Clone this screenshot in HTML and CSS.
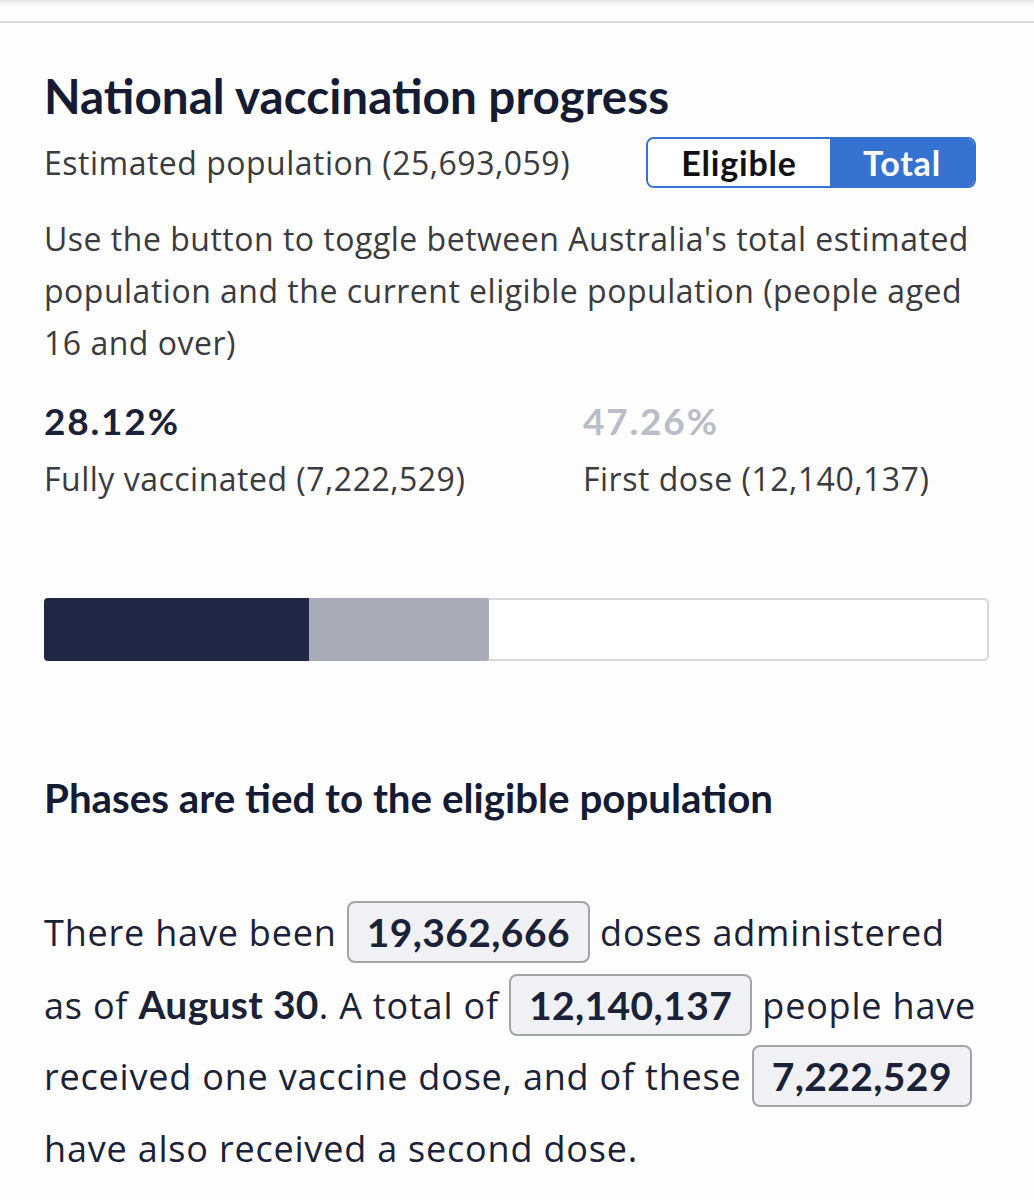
FILE: index.html
```html
<!DOCTYPE html>
<html lang="en">
<head>
<meta charset="utf-8">
<title>National vaccination progress</title>
<link rel="stylesheet" href="styles.css">
</head>
<body>
<div class="topbar"></div>
<main class="card">
  <h1 class="title">National vaccination progress</h1>
  <div class="pop-row">
    <span class="pop">Estimated population (25,693,059)</span>
    <div class="toggle">
      <span class="toggle-opt">Eligible</span>
      <span class="toggle-opt active">Total</span>
    </div>
  </div>
  <p class="desc">Use the button to toggle between Australia's total estimated population and the current eligible population (people aged 16 and over)</p>
  <div class="stats">
    <div class="stat">
      <div class="pct">28.12%</div>
      <div class="label">Fully vaccinated (7,222,529)</div>
    </div>
    <div class="stat">
      <div class="pct muted">47.26%</div>
      <div class="label">First dose (12,140,137)</div>
    </div>
  </div>
  <div class="bar">
    <div class="fill full" style="width:265px"></div>
    <div class="fill first" style="width:180px"></div>
  </div>
  <h2 class="sub">Phases are tied to the eligible population</h2>
  <p class="summary">There have been <span class="badge">19,362,666</span> doses administered as of <b>August 30</b>. A total of <span class="badge">12,140,137</span> people have received one vaccine dose, and of these <span class="badge">7,222,529</span> have also received a second dose.</p>
</main>
</body>
</html>
```
FILE: styles.css
```css
html, body {
  margin: 0;
  padding: 0;
  background: #fefefe;
}
body {
  font-family: "Open Sans", Lato, sans-serif;
  color: #1b2238;
}
.topbar {
  height: 21px;
  border-bottom: 2px solid #d9d9df;
  box-shadow: inset 0 6px 5px -4px rgba(0,0,0,0.12);
  background: #fdfdfd;
}
.card {
  padding: 0 45px 0 44px;
}
.title {
  margin: 43px 0 0;
  font-family: Lato, sans-serif;
  font-size: 47.6px;
  line-height: 60px;
  font-weight: 700;
  color: #141b33;
}
.pop-row {
  margin-top: 11px;
  display: flex;
  justify-content: space-between;
  align-items: center;
  padding-right: 13px;
}
.pop {
  font-size: 32px;
  letter-spacing: 0.5px;
  color: #3b3b3f;
}
.toggle {
  display: flex;
  width: 330px;
  height: 51px;
  box-sizing: border-box;
  border: 2px solid #3572d2;
  border-radius: 8px;
  overflow: hidden;
}
.toggle-opt {
  flex: 0 0 182px;
  display: flex;
  align-items: center;
  justify-content: center;
  font-family: Lato, sans-serif;
  font-size: 34px;
  letter-spacing: 0.8px;
  font-weight: 700;
  color: #111;
  background: #fff;
}
.toggle-opt.active {
  flex: 1;
  background: #3572d2;
  color: #fff;
}
.desc {
  margin: 25px 0 0;
  font-size: 32px;
  letter-spacing: 0.5px;
  line-height: 52px;
  color: #3b3b3f;
}
.stats {
  margin-top: 29px;
  display: grid;
  grid-template-columns: 539px auto;
}
.pct {
  font-family: Lato, sans-serif;
  font-size: 37px;
  letter-spacing: 1.8px;
  font-weight: 700;
  line-height: 46px;
  color: #1b2238;
}
.pct.muted {
  color: #b9bdc8;
}
.label {
  margin-top: 12px;
  font-size: 32px;
  letter-spacing: 0.5px;
  line-height: 46px;
  color: #3b3b3f;
}
.bar {
  margin-top: 96px;
  height: 63px;
  border-radius: 5px;
  display: flex;
  background: #fff;
  box-shadow: inset 0 0 0 2px #d7d8df;
}
.fill.full {
  background: #1e2746;
  border-radius: 4px 0 0 4px;
}
.fill.first {
  background: #a8acb8;
  border-radius: 0 3px 3px 0;
}
.sub {
  margin: 115px 0 0;
  font-family: Lato, sans-serif;
  font-size: 40.3px;
  line-height: 44px;
  font-weight: 700;
  color: #141b33;
}
.summary {
  margin: 77px 0 0;
  font-size: 36px;
  letter-spacing: 0.8px;
  line-height: 71.5px;
  color: #1b2238;
}
.summary b {
  font-family: Lato, sans-serif;
  font-size: 39px;
  letter-spacing: 0.3px;
  font-weight: 700;
}
.badge {
  display: inline-block;
  font-family: Lato, sans-serif;
  font-size: 39px;
  letter-spacing: 0.4px;
  line-height: 58px;
  padding: 0 18px;
  border: 2px solid #a3a4a8;
  border-radius: 8px;
  background: #eff1f4;
  font-weight: 700;
  vertical-align: middle;
  position: relative;
  top: -4px;
}
```
